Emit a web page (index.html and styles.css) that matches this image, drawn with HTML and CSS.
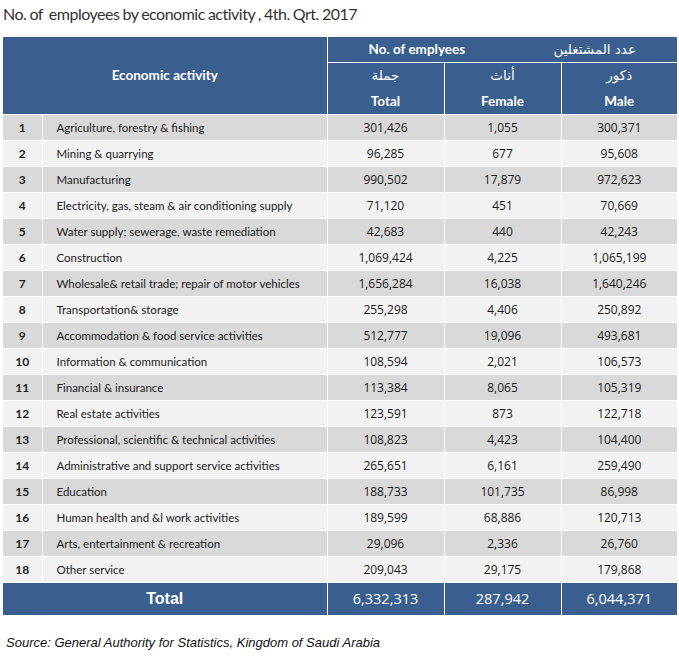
FILE: index.html
```html
<!DOCTYPE html>
<html lang="en">
<head>
<meta charset="utf-8">
<link rel="stylesheet" href="styles.css">
</head>
<body>
<div class="page">
  <h1 class="title">No. of&nbsp; employees by economic activity , 4th. Qrt. 2017</h1>
  <table class="tbl">
    <colgroup>
      <col class="c-no"><col class="c-act"><col class="c-num"><col class="c-num"><col class="c-num3">
    </colgroup>
    <thead>
      <tr class="h1">
        <th colspan="2" rowspan="3" class="h-act">Economic activity</th>
        <th colspan="3" class="h-group">
          <div class="group">
            <span class="g-en">No. of emplyees</span>
            <span class="g-ar" lang="ar" dir="rtl">عدد المشتغلين</span>
          </div>
        </th>
      </tr>
      <tr class="h2">
        <th class="ar" lang="ar">جملة</th>
        <th class="ar" lang="ar">أناث</th>
        <th class="ar" lang="ar">ذكور</th>
      </tr>
      <tr class="h3">
        <th>Total</th>
        <th>Female</th>
        <th>Male</th>
      </tr>
    </thead>
    <tbody>
      <tr><td class="no">1</td><td class="act">Agriculture, forestry &amp; fishing</td><td>301,426</td><td>1,055</td><td>300,371</td></tr>
      <tr><td class="no">2</td><td class="act">Mining &amp; quarrying</td><td>96,285</td><td>677</td><td>95,608</td></tr>
      <tr><td class="no">3</td><td class="act">Manufacturing</td><td>990,502</td><td>17,879</td><td>972,623</td></tr>
      <tr><td class="no">4</td><td class="act">Electricity, gas, steam &amp; air conditioning supply</td><td>71,120</td><td>451</td><td>70,669</td></tr>
      <tr><td class="no">5</td><td class="act">Water supply; sewerage, waste remediation</td><td>42,683</td><td>440</td><td>42,243</td></tr>
      <tr><td class="no">6</td><td class="act">Construction</td><td>1,069,424</td><td>4,225</td><td>1,065,199</td></tr>
      <tr><td class="no">7</td><td class="act">Wholesale&amp; retail trade; repair of motor vehicles</td><td>1,656,284</td><td>16,038</td><td>1,640,246</td></tr>
      <tr><td class="no">8</td><td class="act">Transportation&amp; storage</td><td>255,298</td><td>4,406</td><td>250,892</td></tr>
      <tr><td class="no">9</td><td class="act">Accommodation &amp; food service activities</td><td>512,777</td><td>19,096</td><td>493,681</td></tr>
      <tr><td class="no">10</td><td class="act">Information &amp; communication</td><td>108,594</td><td>2,021</td><td>106,573</td></tr>
      <tr><td class="no">11</td><td class="act">Financial &amp; insurance</td><td>113,384</td><td>8,065</td><td>105,319</td></tr>
      <tr><td class="no">12</td><td class="act">Real estate activities</td><td>123,591</td><td>873</td><td>122,718</td></tr>
      <tr><td class="no">13</td><td class="act">Professional, scientific &amp; technical activities</td><td>108,823</td><td>4,423</td><td>104,400</td></tr>
      <tr><td class="no">14</td><td class="act">Administrative and support service activities</td><td>265,651</td><td>6,161</td><td>259,490</td></tr>
      <tr><td class="no">15</td><td class="act">Education</td><td>188,733</td><td>101,735</td><td>86,998</td></tr>
      <tr><td class="no">16</td><td class="act">Human health and &amp;l work activities</td><td>189,599</td><td>68,886</td><td>120,713</td></tr>
      <tr><td class="no">17</td><td class="act">Arts, entertainment &amp; recreation</td><td>29,096</td><td>2,336</td><td>26,760</td></tr>
      <tr><td class="no">18</td><td class="act">Other service</td><td>209,043</td><td>29,175</td><td>179,868</td></tr>
    </tbody>
    <tfoot>
      <tr class="total">
        <td colspan="2" class="t-label">Total</td>
        <td>6,332,313</td><td>287,942</td><td>6,044,371</td>
      </tr>
    </tfoot>
  </table>
  <p class="source">Source: General Authority for Statistics, Kingdom of Saudi Arabia</p>
</div>
</body>
</html>
```
FILE: styles.css
```css
html, body {
  margin: 0;
  padding: 0;
  background: #ffffff;
}
.page {
  padding: 0 2px 0 3px;
  width: 674px;
}
.title {
  margin: 0;
  padding: 4px 0 0 0;
  height: 37px;
  box-sizing: border-box;
  font-family: Lato, "Open Sans", sans-serif;
  font-weight: normal;
  font-size: 16px;
  color: #333333;
  letter-spacing: -0.5px;
  word-spacing: -0.5px;
  white-space: nowrap;
}
.tbl {
  border-collapse: collapse;
  table-layout: fixed;
  width: 674px;
}
.c-no { width: 39px; }
.c-act { width: 285px; }
.c-num { width: 117px; }
.c-num3 { width: 116px; }
.tbl th, .tbl td {
  border: 1px solid #ffffff;
  padding: 0;
}
.tbl tr > :first-child { border-left: none; }
.tbl tr > :last-child { border-right: none; }
.tbl thead tr:first-child > * { border-top: none; }
.tbl tfoot td { border-bottom: none; }

thead th {
  background: #3a5f8f;
  color: #ffffff;
  font-family: Lato, "Open Sans", sans-serif;
  font-weight: bold;
  font-size: 13.5px;
  text-align: center;
  vertical-align: middle;
}
.h1 { height: 25px; }
.h2 { height: 26px; }
.h3 { height: 26px; }
.h-act { font-size: 13.5px; padding-top: 2px; }
.h2 th { border-bottom: none; }
.h3 th { border-top: none; }
.group {
  display: flex;
  justify-content: space-between;
  align-items: center;
  padding: 0 41px 0 41px;
}
.g-ar, .ar {
  font-family: "DejaVu Sans", "Noto Sans", sans-serif;
  font-weight: normal;
  font-size: 13.5px;
}
tbody tr { height: 26px; }
tbody tr:nth-child(odd) td { background: #d9d9d9; }
tbody tr:nth-child(even) td { background: #f2f2f2; }
tbody td {
  font-family: "Open Sans", "Noto Sans", sans-serif;
  font-size: 12px;
  color: #1a1a1a;
  text-align: center;
}
tbody td.no {
  font-family: Lato, "Open Sans", sans-serif;
  font-weight: bold;
  font-size: 12px;
  text-align: center;
  color: #222222;
}
tbody td.act {
  font-family: Lato, "Open Sans", sans-serif;
  font-size: 11.5px;
  text-align: left;
  padding-left: 14px;
  color: #222222;
  white-space: nowrap;
}
.total { height: 33px; }
.total td {
  background: #3a5f8f;
  color: #ffffff;
  font-family: "Open Sans", "Noto Sans", sans-serif;
  font-size: 14.5px;
  text-align: center;
}
.total td.t-label {
  font-family: "Liberation Sans Narrow", "Liberation Sans", sans-serif;
  font-weight: bold;
  font-size: 16px;
}
.source {
  margin: 20px 0 0 3px;
  font-family: "Liberation Sans", Arial, sans-serif;
  font-style: italic;
  font-size: 13px;
  color: #111111;
}
```
